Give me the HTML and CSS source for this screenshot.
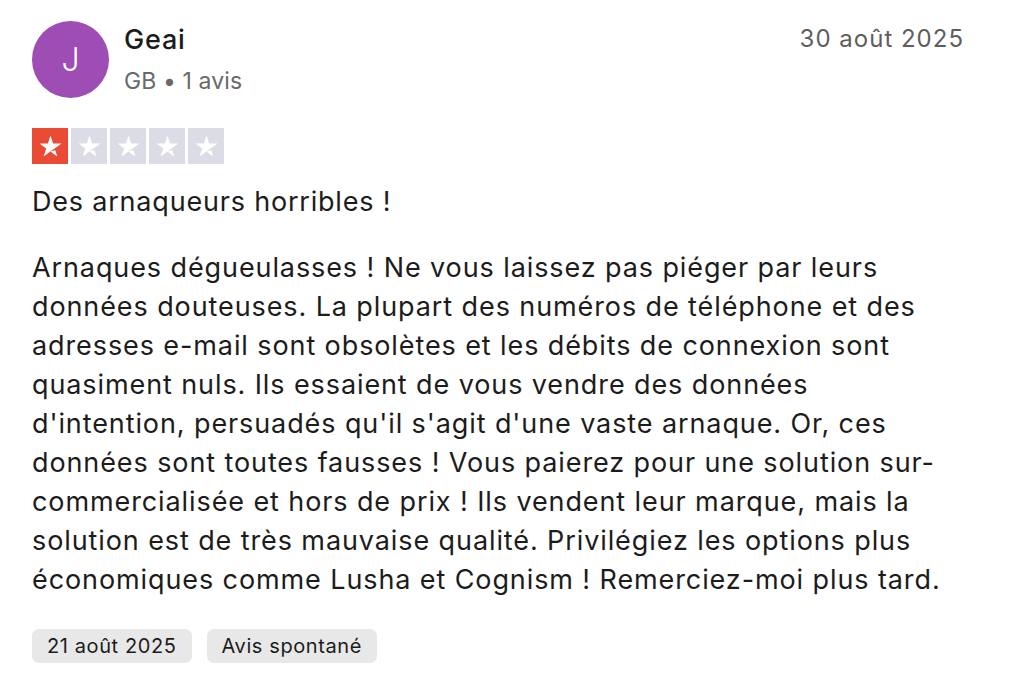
FILE: index.html
```html
<!DOCTYPE html>
<html lang="fr">
<head>
<meta charset="utf-8">
<title>Avis</title>
<link rel="stylesheet" href="styles.css">
</head>
<body>
<article class="review">
  <header class="head">
    <div class="author">
      <div class="avatar">J</div>
      <div class="who">
        <div class="name">Geai</div>
        <div class="meta">GB • 1 avis</div>
      </div>
    </div>
    <div class="date">30 août 2025</div>
  </header>
  <div class="stars">
    <span class="star on"><svg viewBox="0 0 24 24"><path d="M12 16.8l4.6-1.2 1.9 6L12 16.8zm10.6-7.6h-8.1L12 1.5 9.5 9.2H1.4l6.5 4.8-2.5 7.6 6.5-4.8 4-2.9 6.7-4.7z"/></svg></span>
    <span class="star"><svg viewBox="0 0 24 24"><path d="M12 16.8l4.6-1.2 1.9 6L12 16.8zm10.6-7.6h-8.1L12 1.5 9.5 9.2H1.4l6.5 4.8-2.5 7.6 6.5-4.8 4-2.9 6.7-4.7z"/></svg></span>
    <span class="star"><svg viewBox="0 0 24 24"><path d="M12 16.8l4.6-1.2 1.9 6L12 16.8zm10.6-7.6h-8.1L12 1.5 9.5 9.2H1.4l6.5 4.8-2.5 7.6 6.5-4.8 4-2.9 6.7-4.7z"/></svg></span>
    <span class="star"><svg viewBox="0 0 24 24"><path d="M12 16.8l4.6-1.2 1.9 6L12 16.8zm10.6-7.6h-8.1L12 1.5 9.5 9.2H1.4l6.5 4.8-2.5 7.6 6.5-4.8 4-2.9 6.7-4.7z"/></svg></span>
    <span class="star"><svg viewBox="0 0 24 24"><path d="M12 16.8l4.6-1.2 1.9 6L12 16.8zm10.6-7.6h-8.1L12 1.5 9.5 9.2H1.4l6.5 4.8-2.5 7.6 6.5-4.8 4-2.9 6.7-4.7z"/></svg></span>
  </div>
  <h2 class="title">Des arnaqueurs horribles !</h2>
  <p class="body">Arnaques dégueulasses ! Ne vous laissez pas piéger par leurs<br>
données douteuses. La plupart des numéros de téléphone et des<br>
adresses e-mail sont obsolètes et les débits de connexion sont<br>
quasiment nuls. Ils essaient de vous vendre des données<br>
d'intention, persuadés qu'il s'agit d'une vaste arnaque. Or, ces<br>
données sont toutes fausses ! Vous paierez pour une solution sur-<br>commercialisée et hors de prix ! Ils vendent leur marque, mais la<br>
solution est de très mauvaise qualité. Privilégiez les options plus<br>
économiques comme Lusha et Cognism ! Remerciez-moi plus tard.</p>
  <div class="tags">
    <span class="tag">21 août 2025</span>
    <span class="tag">Avis spontané</span>
  </div>
</article>
</body>
</html>
```
FILE: styles.css
```css
* { box-sizing: border-box; }
html, body { margin: 0; padding: 0; background: #ffffff; }
body {
  font-family: Inter, "Liberation Sans", sans-serif;
  color: #1c1c1c;
  letter-spacing: 0.8px;
}
.review {
  padding: 21px 60px 0 32px;
}
.head {
  display: flex;
  justify-content: space-between;
  align-items: flex-start;
}
.author {
  display: flex;
  align-items: flex-start;
  gap: 15px;
}
.avatar {
  width: 77px;
  height: 77px;
  border-radius: 50%;
  background: #9d4db4;
  color: #ffffff;
  display: flex;
  align-items: center;
  justify-content: center;
  font-size: 32px;
  font-weight: 300;
  letter-spacing: 0;
}
.who {
  display: flex;
  flex-direction: column;
  gap: 11px;
  padding-top: 3px;
}
.name { font-size: 27px; font-weight: 500; line-height: 32px; color: #1c1c1c; }
.meta { font-size: 23px; line-height: 28px; color: #696969; letter-spacing: 0.1px; }
.date {
  font-size: 24px;
  line-height: 32px;
  color: #5e5e5e;
  margin-top: 2px;
  letter-spacing: 1px;
}
.stars {
  display: flex;
  gap: 3px;
  margin-top: 30px;
}
.star {
  width: 36px;
  height: 36px;
  background: #dcdce6;
  display: flex;
  align-items: center;
  justify-content: center;
}
.star.on { background: #e94b35; }
.star svg { width: 25px; height: 25px; fill: #ffffff; }
.title {
  margin: 20px 0 0;
  font-size: 27px;
  font-weight: 400;
  line-height: 36px;
}
.body {
  margin: 28px 0 0;
  font-size: 27px;
  line-height: 39px;
  letter-spacing: 0.9px;
}
.tags {
  display: flex;
  gap: 15px;
  margin-top: 30px;
}
.tag {
  background: #e8e8e8;
  border-radius: 7px;
  padding: 0 15px;
  height: 34px;
  display: flex;
  align-items: center;
  font-size: 20px;
  letter-spacing: 0.6px;
  color: #1c1c1c;
}
```
